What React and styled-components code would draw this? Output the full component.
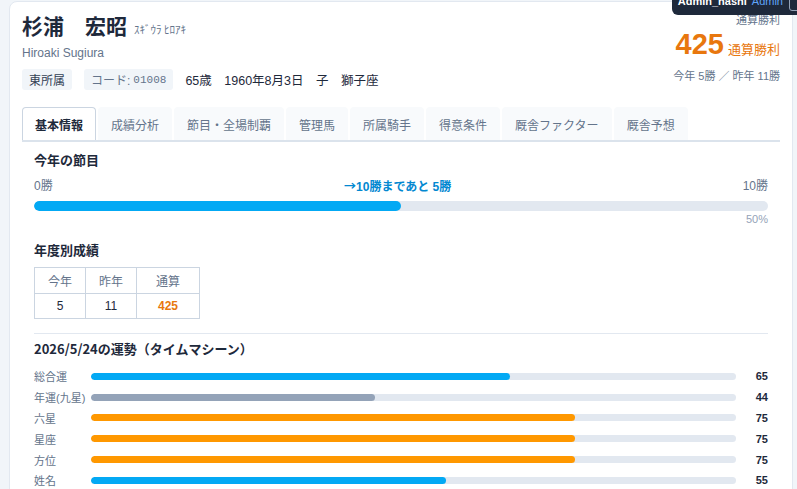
import React from 'react';
import styled, { createGlobalStyle } from 'styled-components';

const GlobalStyle = createGlobalStyle`
  body {
    margin: 0;
    background: #f1f5f9;
    font-family: "Liberation Sans", "Noto Sans CJK JP", sans-serif;
    color: #1e293b;
  }
`;

const Page = styled.div`
  padding: 1px 4px 0 9px;
  height: 488px;
  overflow: hidden;
`;

const Card = styled.div`
  background: #ffffff;
  border: 1px solid #e2e8f0;
  border-radius: 8px;
  padding: 8px 12px 20px;
  min-height: 500px;
`;

// ヘッダー
const Header = styled.div`
  display: flex;
  justify-content: space-between;
  align-items: flex-start;
`;

const NameRow = styled.div`
  display: flex;
  align-items: baseline;
  gap: 7px;
  line-height: 30px;
`;

const Name = styled.h1`
  margin: 0;
  font-size: 21px;
  font-weight: 700;
  color: #1e293b;
  font-family: "Noto Sans CJK JP", sans-serif;
`;

const Kana = styled.span`
  font-size: 11px;
  color: #64748b;
  font-family: "Noto Sans CJK JP", sans-serif;
`;

const English = styled.div`
  margin-top: 1px;
  font-size: 12px;
  line-height: 16px;
  color: #64748b;
`;

const InfoRow = styled.div`
  display: flex;
  align-items: center;
  gap: 12px;
  margin-top: 8px;
`;

const Badge = styled.span`
  display: inline-flex;
  align-items: center;
  height: 21px;
  padding: 0 7px;
  border-radius: 3px;
  background: #f1f5f9;
  font-size: 12px;
  color: ${p => (p.$muted ? '#64748b' : '#334155')};
`;

const Mono = styled.span`
  font-family: "Liberation Mono", monospace;
  font-size: 11px;
  margin-left: 3px;
`;

const Profile = styled.span`
  font-size: 12.5px;
  color: #1e293b;
`;

const Totals = styled.div`
  text-align: right;
`;

const TotalsLabel = styled.div`
  font-size: 11px;
  line-height: 20px;
  color: #64748b;
`;

const TotalsValue = styled.div`
  display: flex;
  justify-content: flex-end;
  align-items: baseline;
  gap: 4px;
  line-height: 28px;
  color: #e8770e;
`;

const BigNumber = styled.span`
  font-size: 29px;
  font-weight: 700;
`;

const BigUnit = styled.span`
  font-size: 13px;
`;

const TotalsSub = styled.div`
  margin-top: 4px;
  font-size: 11px;
  line-height: 16px;
  color: #64748b;
`;

// タブ
const Tabs = styled.div`
  display: flex;
  gap: 2px;
  margin-top: 17px;
  border-bottom: 2px solid #dbe3ec;
`;

const Tab = styled.div`
  height: 32px;
  padding: 0 12px;
  display: flex;
  align-items: center;
  font-size: 12px;
  border: 1px solid ${p => (p.$active ? '#cbd5e1' : 'transparent')};
  border-bottom: none;
  border-radius: 4px 4px 0 0;
  background: ${p => (p.$active ? '#ffffff' : '#f8fafc')};
  color: ${p => (p.$active ? '#1e293b' : '#64748b')};
  font-weight: ${p => (p.$active ? 700 : 400)};
  font-family: "Noto Sans CJK JP", sans-serif;
`;

const Panel = styled.div`
  padding: 9px 12px 0;
`;

const SectionTitle = styled.h3`
  margin: ${p => p.$mt || 0}px 0 0;
  font-size: 13px;
  line-height: 18px;
  font-weight: 700;
  color: #1e293b;
  font-family: "Noto Sans CJK JP", sans-serif;
`;

const MilestoneLabels = styled.div`
  display: flex;
  justify-content: space-between;
  margin-top: 8px;
  font-size: 12px;
  line-height: 18px;
  color: #64748b;
`;

const Remaining = styled.span`
  color: #0288d1;
  font-weight: 700;
`;

const Arrow = styled.span`
  font-family: "Noto Sans CJK JP", sans-serif;
`;

const Track = styled.div`
  height: ${p => p.$h}px;
  background: #e2e8f0;
  border-radius: ${p => p.$h / 2}px;
  overflow: hidden;
  margin-top: ${p => p.$mt || 0}px;
`;

const Fill = styled.div`
  height: 100%;
  background: ${p => p.$color};
  border-radius: inherit;
`;

const Percent = styled.div`
  margin-top: 1px;
  text-align: right;
  font-size: 11px;
  line-height: 14px;
  color: #94a3b8;
`;

const Table = styled.table`
  margin-top: 8px;
  border-collapse: collapse;
  font-size: 12px;
`;

const Th = styled.th`
  width: ${p => p.$w}px;
  height: 25px;
  border: 1px solid #cbd5e1;
  font-weight: 400;
  color: #64748b;
  background: #ffffff;
  padding: 0;
`;

const Td = styled.td`
  height: 24px;
  border: 1px solid #cbd5e1;
  text-align: center;
  padding: 0;
  color: ${p => (p.$accent ? '#e8770e' : '#1e293b')};
  font-weight: ${p => (p.$accent ? 700 : 400)};
`;

const Divider = styled.hr`
  margin: 14px 0 0;
  border: none;
  border-top: 1px solid #e2e8f0;
`;

const FortuneList = styled.div`
  margin-top: 8px;
`;

const FortuneRow = styled.div`
  display: grid;
  grid-template-columns: 57px 1fr 32px;
  align-items: center;
  height: 20.8px;
`;

const FortuneLabel = styled.span`
  font-size: 11px;
  color: #64748b;
`;

const FortuneValue = styled.span`
  text-align: right;
  font-size: 11px;
  font-weight: 700;
  color: #1e293b;
`;

// 右上のユーザー表示
const UserChip = styled.div`
  position: fixed;
  top: -13px;
  right: -22px;
  display: flex;
  align-items: center;
  gap: 5px;
  padding: 4px 8px 4px 6px;
  background: #1e293b;
  border-radius: 6px;
  font-size: 11px;
  line-height: 14px;
`;

const UserName = styled.span`
  color: #ffffff;
  font-weight: 700;
`;

const UserRole = styled.span`
  color: #60a5fa;
`;

const ChipButton = styled.span`
  margin-left: 1px;
  width: 20px;
  height: 18px;
  border: 1px solid #94a3b8;
  border-radius: 3px;
`;

const tabs = ['基本情報', '成績分析', '節目・全場制覇', '管理馬', '所属騎手', '得意条件', '厩舎ファクター', '厩舎予想'];

const fortunes = [
  { label: '総合運', value: 65, color: '#03a9f4' },
  { label: '年運(九星)', value: 44, color: '#94a3b8' },
  { label: '六星', value: 75, color: '#ff9800' },
  { label: '星座', value: 75, color: '#ff9800' },
  { label: '方位', value: 75, color: '#ff9800' },
  { label: '姓名', value: 55, color: '#03a9f4' },
];

const App = () => {
  return (
    <Page>
      <GlobalStyle />
      <Card>
        <Header>
          <div>
            <NameRow>
              <Name>杉浦　宏昭</Name>
              <Kana>ｽｷﾞｳﾗ ﾋﾛｱｷ</Kana>
            </NameRow>
            <English>Hiroaki Sugiura</English>
            <InfoRow>
              <Badge>東所属</Badge>
              <Badge $muted>コード:<Mono>01008</Mono></Badge>
              <Profile>65歳　1960年8月3日　子　獅子座</Profile>
            </InfoRow>
          </div>
          <Totals>
            <TotalsLabel>通算勝利</TotalsLabel>
            <TotalsValue>
              <BigNumber>425</BigNumber>
              <BigUnit>通算勝利</BigUnit>
            </TotalsValue>
            <TotalsSub>今年 5勝 ／ 昨年 11勝</TotalsSub>
          </Totals>
        </Header>

        <Tabs>
          {tabs.map((t, i) => (
            <Tab key={t} $active={i === 0}>{t}</Tab>
          ))}
        </Tabs>

        <Panel>
          <SectionTitle>今年の節目</SectionTitle>
          <MilestoneLabels>
            <span>0勝</span>
            <Remaining><Arrow>→</Arrow>10勝まであと 5勝</Remaining>
            <span>10勝</span>
          </MilestoneLabels>
          <Track $h={10} $mt={5}>
            <Fill $color="#03a9f4" style={{ width: '50%' }} />
          </Track>
          <Percent>50%</Percent>

          <SectionTitle $mt={15}>年度別成績</SectionTitle>
          <Table>
            <thead>
              <tr>
                <Th $w={50}>今年</Th>
                <Th $w={50}>昨年</Th>
                <Th $w={62}>通算</Th>
              </tr>
            </thead>
            <tbody>
              <tr>
                <Td>5</Td>
                <Td>11</Td>
                <Td $accent>425</Td>
              </tr>
            </tbody>
          </Table>

          <Divider />
          <SectionTitle $mt={6}>2026/5/24の運勢（タイムマシーン）</SectionTitle>
          <FortuneList>
            {fortunes.map(f => (
              <FortuneRow key={f.label}>
                <FortuneLabel>{f.label}</FortuneLabel>
                <Track $h={7}>
                  <Fill $color={f.color} style={{ width: `${f.value}%` }} />
                </Track>
                <FortuneValue>{f.value}</FortuneValue>
              </FortuneRow>
            ))}
          </FortuneList>
        </Panel>
      </Card>
      <UserChip>
        <UserName>Admin_hashi</UserName>
        <UserRole>Admin</UserRole>
        <ChipButton />
      </UserChip>
    </Page>
  );
};

export default App;
